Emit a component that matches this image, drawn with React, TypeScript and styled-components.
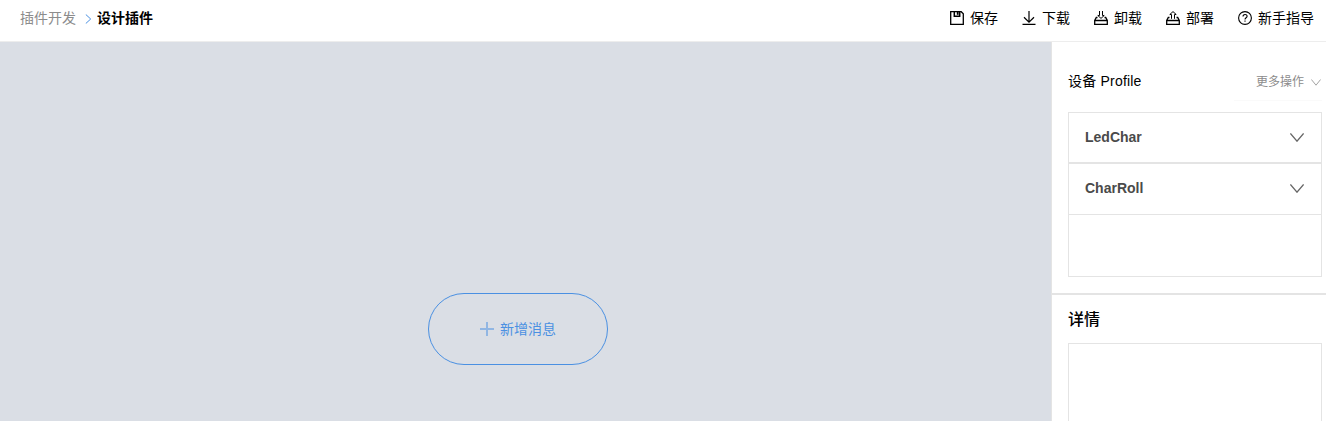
import React from "react";
import styled, { createGlobalStyle } from "styled-components";

const GlobalStyle = createGlobalStyle`
  * { box-sizing: border-box; }
  body {
    margin: 0;
    overflow: hidden;
    color: #000;
    background: #fff;
    font-family: "Liberation Sans", "Noto Sans CJK SC", sans-serif;
    font-size: 14px;
  }
  svg { display: block; flex: none; fill: none; stroke: currentColor; }
`;

const Page = styled.div`
  display: flex;
  flex-direction: column;
  height: 100vh;
`;

const Header = styled.header`
  display: flex;
  flex: none;
  justify-content: space-between;
  height: 42px;
  padding: 0 12px 0 20px;
  border-bottom: 1px solid #ededed;
`;

const Breadcrumb = styled.nav`
  display: flex;
  align-items: center;
  height: 36px;
  white-space: nowrap;
  line-height: 20px;
`;

const CrumbLink = styled.span`
  color: #8c8c8c;
`;

const CrumbArrow = styled.svg`
  margin: 2px 5px 0 9px;
  color: #4a90e2;
`;

const CrumbCurrent = styled.span`
  font-weight: 700;
`;

const Toolbar = styled.div`
  display: flex;
  gap: 24px;
  height: 36px;
`;

const Tool = styled.div`
  display: flex;
  align-items: center;
  gap: 6px;
  line-height: 20px;
  white-space: nowrap;
`;

const Main = styled.main`
  display: flex;
  flex: 1;
  min-height: 0;
`;

const Canvas = styled.section`
  display: flex;
  flex: 1;
  justify-content: center;
  padding: 251px 15px 0 0;
  background: #dadee5;
`;

const AddButton = styled.button`
  display: flex;
  align-items: center;
  justify-content: center;
  gap: 6px;
  width: 180px;
  height: 72px;
  padding: 0;
  border: 1px solid #4a90e2;
  border-radius: 36px;
  background: transparent;
  color: #4a90e2;
  font: inherit;
  line-height: 20px;
`;

const Sidebar = styled.aside`
  display: flex;
  flex-direction: column;
  width: 275px;
  border-left: 1px solid #e4e4e4;
`;

const ProfileSection = styled.section`
  flex: none;
  height: 253px;
  padding: 19px 4px 0 16px;
  border-bottom: 2px solid #e4e4e4;
`;

const ProfileHeader = styled.div`
  display: flex;
  justify-content: space-between;
  height: 51px;
`;

const ProfileTitle = styled.span`
  line-height: 40px;
  letter-spacing: 0.2px;
`;

const MoreActions = styled.div`
  display: flex;
  align-items: center;
  justify-content: flex-end;
  gap: 7px;
  width: 88px;
  height: 40px;
  padding-right: 1px;
  border-bottom: 1px solid #fafafa;
  color: #8c8c8c;
  font-size: 12px;
  white-space: nowrap;

  svg { margin-top: 3px; }
`;

const ServiceList = styled.div`
  height: 165px;
  border: 1px solid #e4e4e4;
`;

const ServiceItem = styled.div`
  display: flex;
  align-items: center;
  justify-content: space-between;
  height: 50px;
  padding: 0 17px 0 16px;
  border-bottom: 1px solid #e4e4e4;
  color: #4a4a4a;
  font-weight: 700;

  & + & {
    height: 52px;
    padding-bottom: 1px;
    border-top: 1px solid #e4e4e4;
  }

  svg { color: #666; }
`;

const ServiceName = styled.span`
  padding-bottom: 2px;
`;

const DetailSection = styled.section`
  display: flex;
  flex: 1;
  flex-direction: column;
  min-height: 0;
  padding: 0 4px 0 16px;
`;

const DetailTitle = styled.h2`
  margin: 0;
  height: 48px;
  font-size: 16px;
  font-weight: 500;
  line-height: 50px;
`;

const DetailBox = styled.div`
  flex: 1;
  border: 1px solid #e4e4e4;
  border-bottom: 0;
`;

const SaveIcon = () => (
  <svg width="14" height="14" viewBox="0 0 14 14" strokeWidth="1.3">
    <path d="M.7.7H11.2L13.3 2.8V13.3H.7Z" />
    <path d="M4.3 .7V5.2H9.7V.7" strokeWidth="1.5" />
    <path d="M7.7 1V3.8" strokeWidth="1.8" />
  </svg>
);

const DownloadIcon = () => (
  <svg width="14" height="14" viewBox="0 0 14 14" strokeWidth="1.2">
    <path d="M7 0V11M2 6.2L7 11.1L12 6.2M.5 13.4H13.5" />
  </svg>
);

const TrayBase = () => (
  <path d="M3.5 6.5H2.3L.7 9.5V13.4H13.3V9.5L11.7 6.5H10.5M.7 9.5H13.3" strokeWidth="1.3" />
);

const UnloadIcon = () => (
  <svg width="14" height="14" viewBox="0 0 14 14">
    <TrayBase />
    <path d="M5.5 0V4.5H3.8L7 7.4L10.2 4.5H8.5V0" />
  </svg>
);

const DeployIcon = () => (
  <svg width="14" height="14" viewBox="0 0 14 14">
    <TrayBase />
    <path d="M5.5 7.8V3.5H3.8L7 .6L10.2 3.5H8.5V7.8" />
  </svg>
);

const HelpIcon = () => (
  <svg width="14" height="14" viewBox="0 0 14 14" strokeWidth="1.1">
    <circle cx="7" cy="7" r="6.4" />
    <path d="M5 5.6C5 2.8 9.1 2.9 9.1 5.3C9.1 6.8 7 6.8 7 8.5M7 9.6V10.8" />
  </svg>
);

const ChevronDown = ({ width, height }: { width: number; height: number }) => (
  <svg width={width} height={height} viewBox={`0 0 ${width} ${height}`}>
    <path d={`M.4 .5L${width / 2} ${height - 0.8}L${width - 0.4} .5`} strokeWidth={width > 12 ? 1.3 : 0.8} />
  </svg>
);

const tools = [
  { label: "保存", Icon: SaveIcon },
  { label: "下载", Icon: DownloadIcon },
  { label: "卸载", Icon: UnloadIcon },
  { label: "部署", Icon: DeployIcon },
  { label: "新手指导", Icon: HelpIcon },
];

const services = ["LedChar", "CharRoll"];

export default function App() {
  return (
    <Page>
      <GlobalStyle />
      <Header>
        <Breadcrumb>
          <CrumbLink>插件开发</CrumbLink>
          <CrumbArrow width="7" height="10" viewBox="0 0 7 10">
            <path d="M.8 .5L5.7 5L.8 9.5" />
          </CrumbArrow>
          <CrumbCurrent>设计插件</CrumbCurrent>
        </Breadcrumb>
        <Toolbar>
          {tools.map(({ label, Icon }) => (
            <Tool key={label}>
              <Icon />
              {label}
            </Tool>
          ))}
        </Toolbar>
      </Header>
      <Main>
        <Canvas>
          <AddButton>
            <svg width="14" height="14" viewBox="0 0 14 14" opacity=".5">
              <path d="M7 0V14M0 7H14" strokeWidth="2" />
            </svg>
            新增消息
          </AddButton>
        </Canvas>
        <Sidebar>
          <ProfileSection>
            <ProfileHeader>
              <ProfileTitle>设备 Profile</ProfileTitle>
              <MoreActions>
                更多操作
                <ChevronDown width={10} height={7} />
              </MoreActions>
            </ProfileHeader>
            <ServiceList>
              {services.map((name) => (
                <ServiceItem key={name}>
                  <ServiceName>{name}</ServiceName>
                  <ChevronDown width={14} height={9} />
                </ServiceItem>
              ))}
            </ServiceList>
          </ProfileSection>
          <DetailSection>
            <DetailTitle>详情</DetailTitle>
            <DetailBox />
          </DetailSection>
        </Sidebar>
      </Main>
    </Page>
  );
}
